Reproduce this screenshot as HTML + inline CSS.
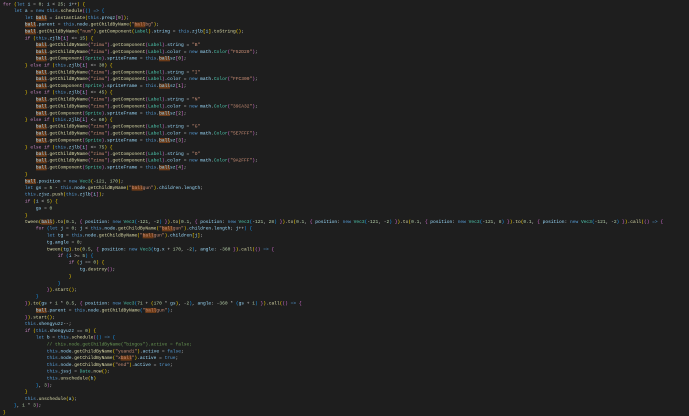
<!DOCTYPE html>
<html><head><meta charset="utf-8">
<style>
html,body{margin:0;padding:0;background:#1e1e1e;width:689px;height:416px;overflow:hidden}
#w{position:absolute;left:0;top:0;width:2067px;height:1248px;transform:scale(0.33333);transform-origin:0 0}
pre{margin:0;padding:4px 0 0 9px;font-family:"Liberation Mono",monospace;font-size:13.7px;line-height:20.4px;color:#d4d4d4;white-space:pre}
.k{color:#569cd6}.c{color:#c586c0}.v{color:#9cdcfe}.f{color:#dcdcaa}.s{color:#ce9178}.n{color:#b5cea8}.t{color:#4ec9b0}
.h{background:#6b3a17}.m{color:#6a9955}.y{color:#ffd700}.p{color:#da70d6}.b{color:#179fff}
</style></head><body><div id="w"><pre><span class="c">for</span> <span class="y">(</span><span class="k">let</span> <span class="v">i</span> = <span class="n">0</span>; <span class="v">i</span> &lt; <span class="n">25</span>; <span class="v">i</span>++<span class="y">)</span> <span class="y">{</span>
    <span class="k">let</span> <span class="v">a</span> = <span class="k">new</span> <span class="k">this</span>.<span class="f">schedule</span><span class="p">(</span><span class="b">()</span> <span class="k">=&gt;</span> <span class="b">{</span>
        <span class="k">let</span> <span class="v h">ball</span> = <span class="f">instantiate</span><span class="y">(</span><span class="k">this</span>.<span class="v">preqz</span><span class="p">[</span><span class="n">9</span><span class="p">]</span><span class="y">)</span>;
        <span class="v h">ball</span>.<span class="v">parent</span> = <span class="k">this</span>.<span class="v">node</span>.<span class="f">getChildByName</span><span class="y">(</span><span class="s">"<span class="h">ball</span>bg"</span><span class="y">)</span>;
        <span class="v h">ball</span>.<span class="f">getChildByName</span><span class="y">(</span><span class="s">"num"</span><span class="y">)</span>.<span class="f">getComponent</span><span class="y">(</span><span class="t">Label</span><span class="y">)</span>.<span class="v">string</span> = <span class="k">this</span>.<span class="v">zjlb</span><span class="y">[</span><span class="v">i</span><span class="y">]</span>.<span class="f">toString</span><span class="y">()</span>;
        <span class="c">if</span> <span class="y">(</span><span class="k">this</span>.<span class="v">zjlb</span><span class="p">[</span><span class="v">i</span><span class="p">]</span> &lt;= <span class="n">15</span><span class="y">)</span> <span class="y">{</span>
            <span class="v h">ball</span>.<span class="f">getChildByName</span><span class="p">(</span><span class="s">"zimu"</span><span class="p">)</span>.<span class="f">getComponent</span><span class="p">(</span><span class="t">Label</span><span class="p">)</span>.<span class="v">string</span> = <span class="s">"B"</span>
            <span class="v h">ball</span>.<span class="f">getChildByName</span><span class="p">(</span><span class="s">"zimu"</span><span class="p">)</span>.<span class="f">getComponent</span><span class="p">(</span><span class="t">Label</span><span class="p">)</span>.<span class="v">color</span> = <span class="k">new</span> <span class="v">math</span>.<span class="t">Color</span><span class="p">(</span><span class="s">"F52D20"</span><span class="p">)</span>;
            <span class="v h">ball</span>.<span class="f">getComponent</span><span class="p">(</span><span class="t">Sprite</span><span class="p">)</span>.<span class="v">spriteFrame</span> = <span class="k">this</span>.<span class="v"><span class="h">ball</span>sz</span><span class="p">[</span><span class="n">0</span><span class="p">]</span>;
        <span class="y">}</span> <span class="c">else</span> <span class="c">if</span> <span class="y">(</span><span class="k">this</span>.<span class="v">zjlb</span><span class="p">[</span><span class="v">i</span><span class="p">]</span> &lt;= <span class="n">30</span><span class="y">)</span> <span class="y">{</span>
            <span class="v h">ball</span>.<span class="f">getChildByName</span><span class="p">(</span><span class="s">"zimu"</span><span class="p">)</span>.<span class="f">getComponent</span><span class="p">(</span><span class="t">Label</span><span class="p">)</span>.<span class="v">string</span> = <span class="s">"I"</span>
            <span class="v h">ball</span>.<span class="f">getChildByName</span><span class="p">(</span><span class="s">"zimu"</span><span class="p">)</span>.<span class="f">getComponent</span><span class="p">(</span><span class="t">Label</span><span class="p">)</span>.<span class="v">color</span> = <span class="k">new</span> <span class="v">math</span>.<span class="t">Color</span><span class="p">(</span><span class="s">"FFC300"</span><span class="p">)</span>;
            <span class="v h">ball</span>.<span class="f">getComponent</span><span class="p">(</span><span class="t">Sprite</span><span class="p">)</span>.<span class="v">spriteFrame</span> = <span class="k">this</span>.<span class="v"><span class="h">ball</span>sz</span><span class="p">[</span><span class="n">1</span><span class="p">]</span>;
        <span class="y">}</span> <span class="c">else</span> <span class="c">if</span> <span class="y">(</span><span class="k">this</span>.<span class="v">zjlb</span><span class="p">[</span><span class="v">i</span><span class="p">]</span> &lt;= <span class="n">45</span><span class="y">)</span> <span class="y">{</span>
            <span class="v h">ball</span>.<span class="f">getChildByName</span><span class="p">(</span><span class="s">"zimu"</span><span class="p">)</span>.<span class="f">getComponent</span><span class="p">(</span><span class="t">Label</span><span class="p">)</span>.<span class="v">string</span> = <span class="s">"N"</span>
            <span class="v h">ball</span>.<span class="f">getChildByName</span><span class="p">(</span><span class="s">"zimu"</span><span class="p">)</span>.<span class="f">getComponent</span><span class="p">(</span><span class="t">Label</span><span class="p">)</span>.<span class="v">color</span> = <span class="k">new</span> <span class="v">math</span>.<span class="t">Color</span><span class="p">(</span><span class="s">"39CA32"</span><span class="p">)</span>;
            <span class="v h">ball</span>.<span class="f">getComponent</span><span class="p">(</span><span class="t">Sprite</span><span class="p">)</span>.<span class="v">spriteFrame</span> = <span class="k">this</span>.<span class="v"><span class="h">ball</span>sz</span><span class="p">[</span><span class="n">2</span><span class="p">]</span>;
        <span class="y">}</span> <span class="c">else</span> <span class="c">if</span> <span class="y">(</span><span class="k">this</span>.<span class="v">zjlb</span><span class="p">[</span><span class="v">i</span><span class="p">]</span> &lt;= <span class="n">60</span><span class="y">)</span> <span class="y">{</span>
            <span class="v h">ball</span>.<span class="f">getChildByName</span><span class="p">(</span><span class="s">"zimu"</span><span class="p">)</span>.<span class="f">getComponent</span><span class="p">(</span><span class="t">Label</span><span class="p">)</span>.<span class="v">string</span> = <span class="s">"G"</span>
            <span class="v h">ball</span>.<span class="f">getChildByName</span><span class="p">(</span><span class="s">"zimu"</span><span class="p">)</span>.<span class="f">getComponent</span><span class="p">(</span><span class="t">Label</span><span class="p">)</span>.<span class="v">color</span> = <span class="k">new</span> <span class="v">math</span>.<span class="t">Color</span><span class="p">(</span><span class="s">"5E7FFF"</span><span class="p">)</span>;
            <span class="v h">ball</span>.<span class="f">getComponent</span><span class="p">(</span><span class="t">Sprite</span><span class="p">)</span>.<span class="v">spriteFrame</span> = <span class="k">this</span>.<span class="v"><span class="h">ball</span>sz</span><span class="p">[</span><span class="n">3</span><span class="p">]</span>;
        <span class="y">}</span> <span class="c">else</span> <span class="c">if</span> <span class="y">(</span><span class="k">this</span>.<span class="v">zjlb</span><span class="p">[</span><span class="v">i</span><span class="p">]</span> &lt;= <span class="n">75</span><span class="y">)</span> <span class="y">{</span>
            <span class="v h">ball</span>.<span class="f">getChildByName</span><span class="p">(</span><span class="s">"zimu"</span><span class="p">)</span>.<span class="f">getComponent</span><span class="p">(</span><span class="t">Label</span><span class="p">)</span>.<span class="v">string</span> = <span class="s">"O"</span>
            <span class="v h">ball</span>.<span class="f">getChildByName</span><span class="p">(</span><span class="s">"zimu"</span><span class="p">)</span>.<span class="f">getComponent</span><span class="p">(</span><span class="t">Label</span><span class="p">)</span>.<span class="v">color</span> = <span class="k">new</span> <span class="v">math</span>.<span class="t">Color</span><span class="p">(</span><span class="s">"9A2FFF"</span><span class="p">)</span>;
            <span class="v h">ball</span>.<span class="f">getComponent</span><span class="p">(</span><span class="t">Sprite</span><span class="p">)</span>.<span class="v">spriteFrame</span> = <span class="k">this</span>.<span class="v"><span class="h">ball</span>sz</span><span class="p">[</span><span class="n">4</span><span class="p">]</span>;
        <span class="y">}</span>
        <span class="v h">ball</span>.<span class="v">position</span> = <span class="k">new</span> <span class="t">Vec3</span><span class="y">(</span>-<span class="n">121</span>, <span class="n">170</span><span class="y">)</span>;
        <span class="k">let</span> <span class="v">gs</span> = <span class="n">5</span> - <span class="k">this</span>.<span class="v">node</span>.<span class="f">getChildByName</span><span class="y">(</span><span class="s">"<span class="h">ball</span>gun"</span><span class="y">)</span>.<span class="v">children</span>.<span class="v">length</span>;
        <span class="k">this</span>.<span class="v">zjsz</span>.<span class="f">push</span><span class="y">(</span><span class="k">this</span>.<span class="v">zjlb</span><span class="p">[</span><span class="v">i</span><span class="p">]</span><span class="y">)</span>;
        <span class="c">if</span> <span class="y">(</span><span class="v">i</span> &lt; <span class="n">5</span><span class="y">)</span> <span class="y">{</span>
            <span class="v">gs</span> = <span class="n">0</span>
        <span class="y">}</span>
        <span class="f">tween</span><span class="y">(</span><span class="v h">ball</span><span class="y">)</span>.<span class="f">to</span><span class="y">(</span><span class="n">0.1</span>, <span class="p">{</span> <span class="v">position</span>: <span class="k">new</span> <span class="t">Vec3</span><span class="b">(</span>-<span class="n">121</span>, -<span class="n">2</span><span class="b">)</span> <span class="p">}</span><span class="y">)</span>.<span class="f">to</span><span class="y">(</span><span class="n">0.1</span>, <span class="p">{</span> <span class="v">position</span>: <span class="k">new</span> <span class="t">Vec3</span><span class="b">(</span>-<span class="n">121</span>, <span class="n">28</span><span class="b">)</span> <span class="p">}</span><span class="y">)</span>.<span class="f">to</span><span class="y">(</span><span class="n">0.1</span>, <span class="p">{</span> <span class="v">position</span>: <span class="k">new</span> <span class="t">Vec3</span><span class="b">(</span>-<span class="n">121</span>, -<span class="n">2</span><span class="b">)</span> <span class="p">}</span><span class="y">)</span>.<span class="f">to</span><span class="y">(</span><span class="n">0.1</span>, <span class="p">{</span> <span class="v">position</span>: <span class="k">new</span> <span class="t">Vec3</span><span class="b">(</span>-<span class="n">121</span>, <span class="n">8</span><span class="b">)</span> <span class="p">}</span><span class="y">)</span>.<span class="f">to</span><span class="y">(</span><span class="n">0.1</span>, <span class="p">{</span> <span class="v">position</span>: <span class="k">new</span> <span class="t">Vec3</span><span class="b">(</span>-<span class="n">121</span>, -<span class="n">2</span><span class="b">)</span> <span class="p">}</span><span class="y">)</span>.<span class="f">call</span><span class="y">(</span><span class="p">()</span> <span class="k">=&gt;</span> <span class="p">{</span>
            <span class="c">for</span> <span class="b">(</span><span class="k">let</span> <span class="v">j</span> = <span class="n">0</span>; <span class="v">j</span> &lt; <span class="k">this</span>.<span class="v">node</span>.<span class="f">getChildByName</span><span class="y">(</span><span class="s">"<span class="h">ball</span>gun"</span><span class="y">)</span>.<span class="v">children</span>.<span class="v">length</span>; <span class="v">j</span>++<span class="b">)</span> <span class="b">{</span>
                <span class="k">let</span> <span class="v">tg</span> = <span class="k">this</span>.<span class="v">node</span>.<span class="f">getChildByName</span><span class="y">(</span><span class="s">"<span class="h">ball</span>gun"</span><span class="y">)</span>.<span class="v">children</span><span class="y">[</span><span class="v">j</span><span class="y">]</span>;
                <span class="v">tg</span>.<span class="v">angle</span> = <span class="n">0</span>;
                <span class="f">tween</span><span class="y">(</span><span class="v">tg</span><span class="y">)</span>.<span class="f">to</span><span class="y">(</span><span class="n">0.5</span>, <span class="p">{</span> <span class="v">position</span>: <span class="k">new</span> <span class="t">Vec3</span><span class="b">(</span><span class="v">tg</span>.<span class="v">x</span> + <span class="n">170</span>, -<span class="n">2</span><span class="b">)</span>, <span class="v">angle</span>: -<span class="n">360</span> <span class="p">}</span><span class="y">)</span>.<span class="f">call</span><span class="y">(</span><span class="p">()</span> <span class="k">=&gt;</span> <span class="p">{</span>
                    <span class="c">if</span> <span class="b">(</span><span class="v">i</span> &gt;= <span class="n">5</span><span class="b">)</span> <span class="b">{</span>
                        <span class="c">if</span> <span class="y">(</span><span class="v">j</span> == <span class="n">0</span><span class="y">)</span> <span class="y">{</span>
                            <span class="v">tg</span>.<span class="f">destroy</span><span class="p">()</span>;
                        <span class="y">}</span>
                    <span class="b">}</span>
                <span class="p">}</span><span class="y">)</span>.<span class="f">start</span><span class="y">()</span>;
            <span class="b">}</span>
        <span class="p">}</span><span class="y">)</span>.<span class="f">to</span><span class="y">(</span><span class="v">gs</span> + <span class="n">1</span> * <span class="n">0.5</span>, <span class="p">{</span> <span class="v">position</span>: <span class="k">new</span> <span class="t">Vec3</span><span class="b">(</span><span class="n">71</span> + <span class="y">(</span><span class="n">170</span> * <span class="v">gs</span><span class="y">)</span>, -<span class="n">2</span><span class="b">)</span>, <span class="v">angle</span>: -<span class="n">360</span> * <span class="b">(</span><span class="v">gs</span> + <span class="n">1</span><span class="b">)</span> <span class="p">}</span><span class="y">)</span>.<span class="f">call</span><span class="y">(</span><span class="p">()</span> <span class="k">=&gt;</span> <span class="p">{</span>
            <span class="v h">ball</span>.<span class="v">parent</span> = <span class="k">this</span>.<span class="v">node</span>.<span class="f">getChildByName</span><span class="b">(</span><span class="s">"<span class="h">ball</span>gun"</span><span class="b">)</span>;
        <span class="p">}</span><span class="y">)</span>.<span class="f">start</span><span class="y">()</span>;
        <span class="k">this</span>.<span class="v">shengyuzz</span>--;
        <span class="c">if</span> <span class="y">(</span><span class="k">this</span>.<span class="v">shengyuzz</span> == <span class="n">0</span><span class="y">)</span> <span class="y">{</span>
            <span class="k">let</span> <span class="v">b</span> = <span class="k">this</span>.<span class="f">schedule</span><span class="p">(</span><span class="b">()</span> <span class="k">=&gt;</span> <span class="b">{</span>
                <span class="m">// this.node.getChildByName("bingos").active = false;</span>
                <span class="k">this</span>.<span class="v">node</span>.<span class="f">getChildByName</span><span class="y">(</span><span class="s">"yuandi"</span><span class="y">)</span>.<span class="v">active</span> = <span class="k">false</span>;
                <span class="k">this</span>.<span class="v">node</span>.<span class="f">getChildByName</span><span class="y">(</span><span class="s">"x<span class="h">ball</span>"</span><span class="y">)</span>.<span class="v">active</span> = <span class="k">true</span>;
                <span class="k">this</span>.<span class="v">node</span>.<span class="f">getChildByName</span><span class="y">(</span><span class="s">"end"</span><span class="y">)</span>.<span class="v">active</span> = <span class="k">true</span>;
                <span class="k">this</span>.<span class="v">jssj</span> = <span class="t">Date</span>.<span class="f">now</span><span class="y">()</span>;
                <span class="k">this</span>.<span class="f">unschedule</span><span class="y">(</span><span class="v">b</span><span class="y">)</span>
            <span class="b">}</span>, <span class="n">3</span><span class="p">)</span>;
        <span class="y">}</span>
        <span class="k">this</span>.<span class="f">unschedule</span><span class="y">(</span><span class="v">a</span><span class="y">)</span>;
    <span class="b">}</span>, <span class="n">1</span> * <span class="n">3</span><span class="p">)</span>;
<span class="y">}</span></pre></div></body></html>
